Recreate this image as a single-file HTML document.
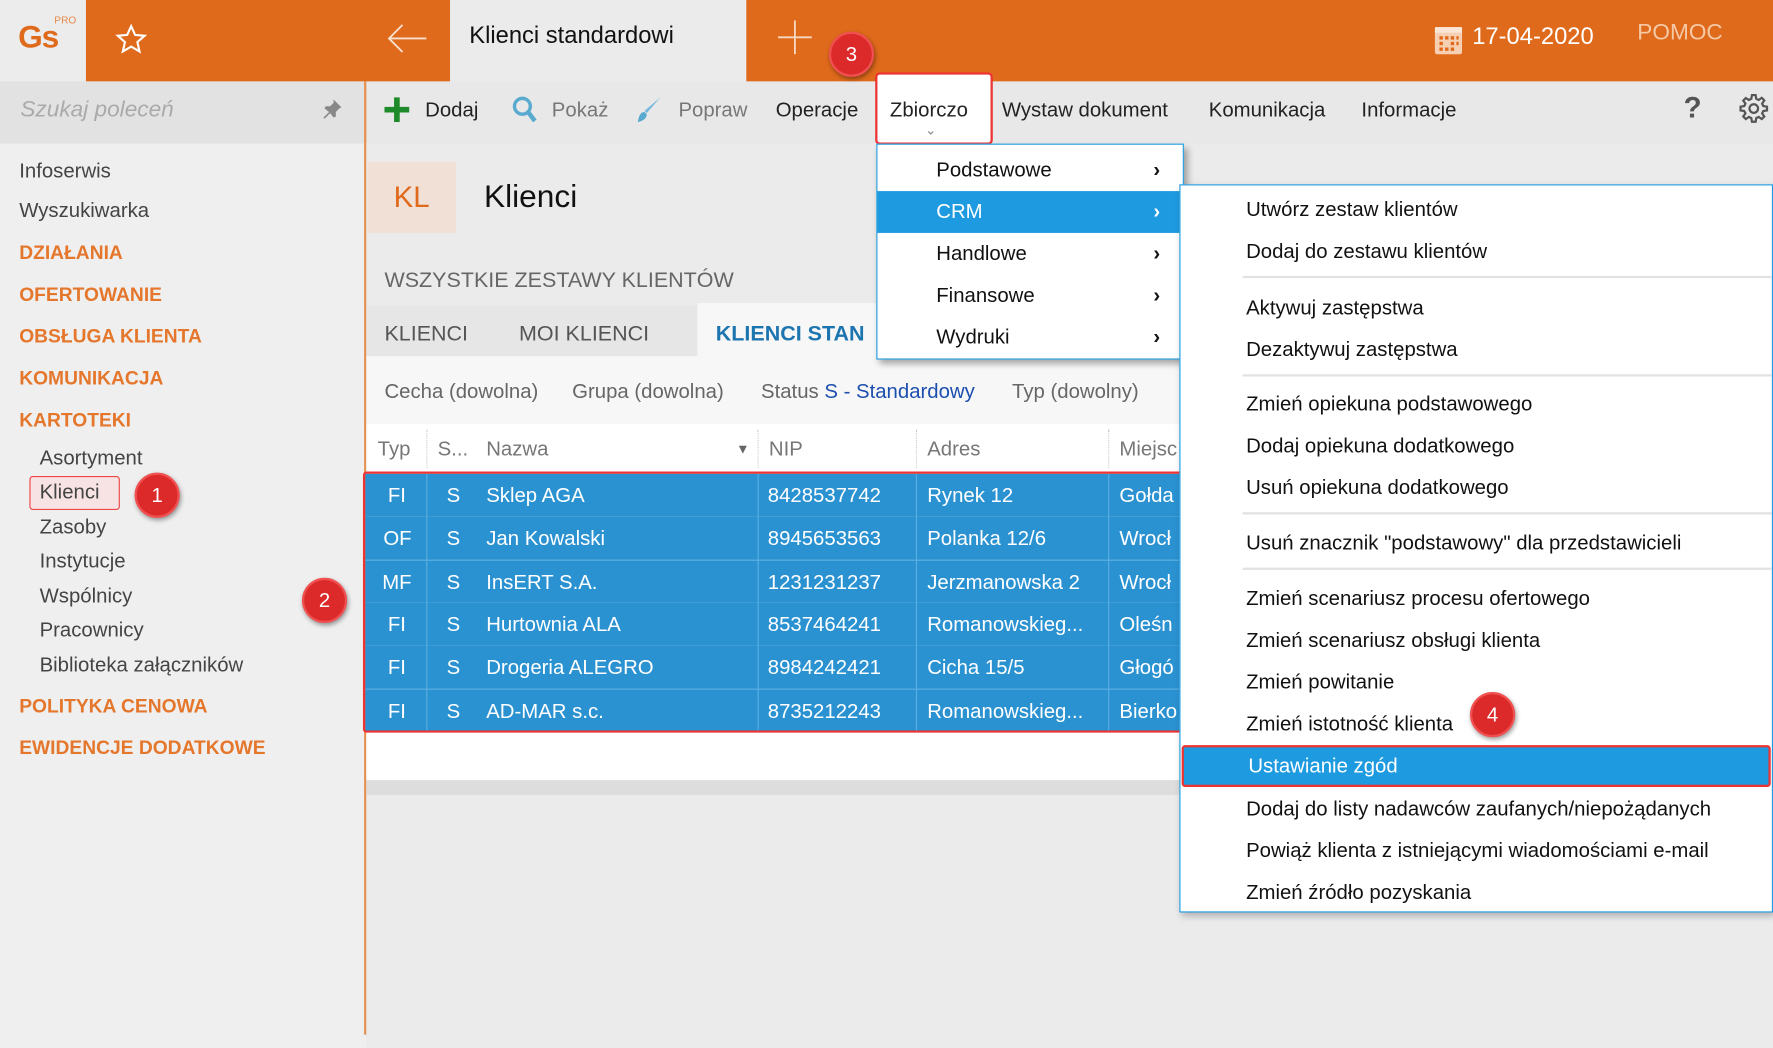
<!DOCTYPE html>
<html><head><meta charset="utf-8"><style>
*{margin:0;padding:0;box-sizing:border-box}
html,body{width:1773px;height:915px;overflow:hidden;background:#efefef}
#w{position:absolute;left:0;top:0;width:1568px;height:810px;transform:scale(1.13074);transform-origin:0 0;font-family:"Liberation Sans","DejaVu Sans",sans-serif;color:#222;font-size:18px}
.a{position:absolute;white-space:nowrap}
.or{color:#e5772c;font-weight:bold;font-size:17px}
.sb{color:#444;font-size:18px}
.mi{position:absolute;left:0;right:0;height:37px;line-height:37px;font-size:18px;color:#111}
.sep{position:absolute;left:55px;right:0;height:2px;background:#e2e2e2}
.row{position:absolute;left:323px;width:722px;height:38px;line-height:38px;color:#fff;font-size:18px;background:#2b92d2}
.row span{position:absolute}
.badge{position:absolute;width:40px;height:40px;border-radius:50%;background:#dc2a2a;color:#fff;text-align:center;line-height:36px;font-size:18px;box-shadow:1px 2px 4px rgba(0,0,0,.4);border:2px solid #f05050}
.chev{position:absolute;left:244px;font-weight:bold}
</style></head><body><div id="w">
<div class="a" style="left:0;top:0;width:76px;height:72px;background:#ececec"></div>
<div class="a" style="left:16px;top:17px;font-size:28px;color:#e06a1b;font-weight:bold;letter-spacing:-1px">Gs</div>
<div class="a" style="left:48px;top:13px;font-size:9px;color:#e88a4a">PRO</div>
<div class="a" style="left:76px;top:0;width:322px;height:72px;background:#e06a1b"></div>
<svg class="a" style="left:101px;top:20px" width="30" height="30" viewBox="0 0 24 24"><path d="M12 2.5l2.8 6.2 6.7.6-5.1 4.5 1.5 6.6L12 17l-5.9 3.4 1.5-6.6-5.1-4.5 6.7-.6z" fill="none" stroke="#fff" stroke-width="1.5"/></svg>
<svg class="a" style="left:341px;top:20px" width="38" height="28" viewBox="0 0 38 28"><path d="M36 14H3M15 2L3 14l12 12" fill="none" stroke="#f8e0d0" stroke-width="1.6"/></svg>
<div class="a" style="left:398px;top:0;width:262px;height:72px;background:#ebebeb"></div>
<div class="a" style="left:415px;top:20px;font-size:21px;color:#111">Klienci standardowi</div>
<div class="a" style="left:660px;top:0;width:908px;height:72px;background:#e06a1b"></div>
<svg class="a" style="left:688px;top:18px" width="30" height="30"><path d="M15 0v30M0 15h30" stroke="#f8d8c0" stroke-width="1.6"/></svg>
<svg class="a" style="left:1268px;top:22px" width="26" height="28" viewBox="0 0 26 28"><rect x="1" y="2" width="24" height="24" rx="2" fill="#f7cfb3"/><rect x="1" y="2" width="24" height="5" fill="#fbe5d5"/><g fill="#e06a1b"><rect x="5" y="10" width="3" height="3"/><rect x="10" y="10" width="3" height="3"/><rect x="15" y="10" width="3" height="3"/><rect x="20" y="10" width="2" height="3"/><rect x="5" y="15" width="3" height="3"/><rect x="15" y="15" width="3" height="3"/><rect x="20" y="15" width="2" height="3"/><rect x="5" y="20" width="3" height="3"/><rect x="10" y="20" width="3" height="3"/><rect x="15" y="20" width="3" height="3"/></g></svg>
<div class="a" style="left:1302px;top:21px;font-size:21px;color:#fff">17-04-2020</div>
<div class="a" style="left:1448px;top:18px;font-size:20px;color:#f6c8a6">POMOC</div>

<div class="a" style="left:0;top:72px;width:322px;height:55px;background:#e2e2e2"></div>
<div class="a" style="left:18px;top:86px;font-size:20px;color:#aaa;font-style:italic">Szukaj poleceń</div>
<svg class="a" style="left:284px;top:86px" width="20" height="20" viewBox="0 0 20 20"><path d="M11 2l7 7-2 1-3 3 0 4-2 1-3-4-5 5-1-1 5-5-4-3 1-2 4 0 3-3z" fill="#888"/></svg>
<div class="a" style="left:322px;top:72px;width:2px;height:843px;background:#e6904f"></div>
<div class="a sb" style="left:17px;top:141px">Infoserwis</div>
<div class="a sb" style="left:17px;top:176px">Wyszukiwarka</div>
<div class="a or" style="left:17px;top:214px">DZIAŁANIA</div>
<div class="a or" style="left:17px;top:251px">OFERTOWANIE</div>
<div class="a or" style="left:17px;top:288px">OBSŁUGA KLIENTA</div>
<div class="a or" style="left:17px;top:325px">KOMUNIKACJA</div>
<div class="a or" style="left:17px;top:362px">KARTOTEKI</div>
<div class="a sb" style="left:35px;top:395px">Asortyment</div>
<div class="a" style="left:26px;top:421px;width:80px;height:30px;border:1.5px solid #e44;border-radius:3px;background:#f7e3e3"></div>
<div class="a sb" style="left:35px;top:425px">Klienci</div>
<div class="a sb" style="left:35px;top:456px">Zasoby</div>
<div class="a sb" style="left:35px;top:486px">Instytucje</div>
<div class="a sb" style="left:35px;top:517px">Wspólnicy</div>
<div class="a sb" style="left:35px;top:547px">Pracownicy</div>
<div class="a sb" style="left:35px;top:578px">Biblioteka załączników</div>
<div class="a or" style="left:17px;top:615px">POLITYKA CENOWA</div>
<div class="a or" style="left:17px;top:652px">EWIDENCJE DODATKOWE</div>
<div class="badge" style="left:119px;top:418px">1</div>

<div class="a" style="left:324px;top:72px;width:1244px;height:55px;background:#e8e8e8"></div>
<svg class="a" style="left:340px;top:86px" width="22" height="22"><path d="M11 0v22M0 11h22" stroke="#1f8a2a" stroke-width="5"/></svg>
<div class="a" style="left:376px;top:87px">Dodaj</div>
<svg class="a" style="left:452px;top:84px" width="24" height="26" viewBox="0 0 24 26"><circle cx="10" cy="10" r="7" fill="none" stroke="#5aaad0" stroke-width="3"/><path d="M15 15l6 8" stroke="#5aaad0" stroke-width="4"/></svg>
<div class="a" style="left:488px;top:87px;color:#777">Pokaż</div>
<svg class="a" style="left:562px;top:84px" width="24" height="26" viewBox="0 0 24 26"><path d="M22 2L10 16l-2-2z" fill="#78b8dc"/><path d="M8 15c-4 0-5 4-6 9 4-1 8-3 8-7z" fill="#5aaad0"/></svg>
<div class="a" style="left:600px;top:87px;color:#777">Popraw</div>
<div class="a" style="left:686px;top:87px">Operacje</div>
<div class="a" style="left:774px;top:64px;width:104px;height:64px;border:2px solid #e33;border-radius:4px;background:#fff"></div>
<div class="a" style="left:787px;top:87px">Zbiorczo</div>
<div class="a" style="left:818px;top:108px;font-size:12px;color:#888">&#8964;</div>
<div class="a" style="left:886px;top:87px">Wystaw dokument</div>
<div class="a" style="left:1069px;top:87px">Komunikacja</div>
<div class="a" style="left:1204px;top:87px">Informacje</div>
<div class="a" style="left:1489px;top:80px;font-size:26px;color:#555;font-weight:bold">?</div>
<svg class="a" style="left:1538px;top:83px" width="26" height="26" viewBox="0 0 24 24"><path d="M12 8.5a3.5 3.5 0 1 0 0 7 3.5 3.5 0 0 0 0-7zM10.5 1h3l.5 3 2 1 2.5-1.8 2.1 2.1L18.8 8l1 2 3 .5v3l-3 .5-1 2 1.8 2.5-2.1 2.1-2.5-1.8-2 1-.5 3h-3l-.5-3-2-1-2.5 1.8-2.1-2.1L5.2 16l-1-2-3-.5v-3l3-.5 1-2-1.8-2.5 2.1-2.1L8 5l2-1z" fill="none" stroke="#555" stroke-width="1.8"/></svg>
<div class="badge" style="left:733px;top:28px">3</div>

<div class="a" style="left:324px;top:127px;width:1244px;height:800px;background:#ebebeb"></div>
<div class="a" style="left:325px;top:143px;width:78px;height:63px;background:#f0e0d6;color:#e06a1b;font-size:26px;text-align:center;line-height:63px">KL</div>
<div class="a" style="left:428px;top:158px;font-size:28px;color:#111">Klienci</div>
<div class="a" style="left:340px;top:238px;font-size:19px;color:#666">WSZYSTKIE ZESTAWY KLIENTÓW</div>
<div class="a" style="left:324px;top:270px;width:292px;height:45px;background:#e6e6e6"></div>
<div class="a" style="left:340px;top:285px;font-size:19px;color:#555">KLIENCI</div>
<div class="a" style="left:459px;top:285px;font-size:19px;color:#555">MOI KLIENCI</div>
<div class="a" style="left:617px;top:268px;width:430px;height:47px;background:#f7f7f7"></div>
<div class="a" style="left:633px;top:285px;font-size:19px;color:#1d75b0;font-weight:bold">KLIENCI STAN</div>
<div class="a" style="left:324px;top:315px;width:1244px;height:60px;background:#f7f7f7"></div>
<div class="a" style="left:340px;top:336px;color:#666">Cecha (dowolna)</div>
<div class="a" style="left:506px;top:336px;color:#666">Grupa (dowolna)</div>
<div class="a" style="left:673px;top:336px;color:#666">Status <span style="color:#1c4fb0">S - Standardowy</span></div>
<div class="a" style="left:895px;top:336px;color:#666">Typ (dowolny)</div>
<div class="a" style="left:324px;top:375px;width:1244px;height:42px;background:#fff"></div>
<div class="a" style="left:334px;top:387px;color:#777">Typ</div>
<div class="a" style="left:387px;top:387px;color:#777">S...</div>
<div class="a" style="left:430px;top:387px;color:#777">Nazwa</div>
<div class="a" style="left:651px;top:390px;font-size:12px;color:#666">▼</div>
<div class="a" style="left:680px;top:387px;color:#777">NIP</div>
<div class="a" style="left:820px;top:387px;color:#777">Adres</div>
<div class="a" style="left:990px;top:387px;color:#777">Miejsc</div>
<div class="a" style="left:377px;top:380px;height:34px;border-left:1px dotted #ccc"></div>
<div class="a" style="left:670px;top:380px;height:34px;border-left:1px dotted #ccc"></div>
<div class="a" style="left:810px;top:380px;height:34px;border-left:1px dotted #ccc"></div>
<div class="a" style="left:980px;top:380px;height:34px;border-left:1px dotted #ccc"></div>

<div class="row" style="top:419px"><span style="left:20px">FI</span><span style="left:72px">S</span><span style="left:107px">Sklep AGA</span><span style="left:356px">8428537742</span><span style="left:497px">Rynek 12</span><span style="left:667px">Gołda</span></div>
<div class="row" style="top:457px"><span style="left:16px">OF</span><span style="left:72px">S</span><span style="left:107px">Jan Kowalski</span><span style="left:356px">8945653563</span><span style="left:497px">Polanka  12/6</span><span style="left:667px">Wrocł</span></div>
<div class="row" style="top:495px;border-top:1px solid #5aaee0"><span style="left:15px">MF</span><span style="left:72px">S</span><span style="left:107px">InsERT S.A.</span><span style="left:356px">1231231237</span><span style="left:497px">Jerzmanowska 2</span><span style="left:667px">Wrocł</span></div>
<div class="row" style="top:533px"><span style="left:20px">FI</span><span style="left:72px">S</span><span style="left:107px">Hurtownia ALA</span><span style="left:356px">8537464241</span><span style="left:497px">Romanowskieg...</span><span style="left:667px">Oleśn</span></div>
<div class="row" style="top:571px"><span style="left:20px">FI</span><span style="left:72px">S</span><span style="left:107px">Drogeria ALEGRO</span><span style="left:356px">8984242421</span><span style="left:497px">Cicha  15/5</span><span style="left:667px">Głogó</span></div>
<div class="row" style="top:609px;border-top:1px solid #5aaee0"><span style="left:20px">FI</span><span style="left:72px">S</span><span style="left:107px">AD-MAR s.c.</span><span style="left:356px">8735212243</span><span style="left:497px">Romanowskieg...</span><span style="left:667px">Bierko</span></div>
<div class="a" style="left:377px;top:419px;width:1px;height:228px;background:#5aaee0"></div>
<div class="a" style="left:670px;top:419px;width:1px;height:228px;background:#5aaee0"></div>
<div class="a" style="left:810px;top:419px;width:1px;height:228px;background:#5aaee0"></div>
<div class="a" style="left:980px;top:419px;width:1px;height:228px;background:#5aaee0"></div>
<div class="a" style="left:321px;top:417px;width:726px;height:231px;border:2px solid #e33;border-radius:3px"></div>
<div class="a" style="left:324px;top:648px;width:720px;height:42px;background:#fff"></div>
<div class="a" style="left:324px;top:690px;width:720px;height:13px;background:#ddd"></div>
<div class="badge" style="left:267px;top:511px">2</div>

<div class="a" style="left:775px;top:127px;width:272px;height:191px;background:#fff;border:1px solid #1e9be0;box-shadow:3px 4px 6px rgba(0,0,0,.35)">
<div class="mi" style="top:4px"><span style="position:absolute;left:52px">Podstawowe</span><span class="chev">›</span></div>
<div class="mi" style="top:41px;background:#1e9be0;color:#fff"><span style="position:absolute;left:52px">CRM</span><span class="chev">›</span></div>
<div class="mi" style="top:78px"><span style="position:absolute;left:52px">Handlowe</span><span class="chev">›</span></div>
<div class="mi" style="top:115px"><span style="position:absolute;left:52px">Finansowe</span><span class="chev">›</span></div>
<div class="mi" style="top:152px"><span style="position:absolute;left:52px">Wydruki</span><span class="chev">›</span></div>
</div>

<div class="a" style="left:1043px;top:163px;width:525px;height:644px;background:#fff;border:1px solid #1e9be0;box-shadow:2px 3px 6px rgba(0,0,0,.25)">
<div class="mi" style="top:3px;padding-left:58px">Utwórz zestaw klientów</div>
<div class="mi" style="top:40px;padding-left:58px">Dodaj do zestawu klientów</div>
<div class="sep" style="top:80px"></div>
<div class="mi" style="top:90px;padding-left:58px">Aktywuj zastępstwa</div>
<div class="mi" style="top:127px;padding-left:58px">Dezaktywuj zastępstwa</div>
<div class="sep" style="top:167px"></div>
<div class="mi" style="top:175px;padding-left:58px">Zmień opiekuna podstawowego</div>
<div class="mi" style="top:212px;padding-left:58px">Dodaj opiekuna dodatkowego</div>
<div class="mi" style="top:249px;padding-left:58px">Usuń opiekuna dodatkowego</div>
<div class="sep" style="top:289px"></div>
<div class="mi" style="top:298px;padding-left:58px">Usuń znacznik "podstawowy" dla przedstawicieli</div>
<div class="sep" style="top:338px"></div>
<div class="mi" style="top:347px;padding-left:58px">Zmień scenariusz procesu ofertowego</div>
<div class="mi" style="top:384px;padding-left:58px">Zmień scenariusz obsługi klienta</div>
<div class="mi" style="top:421px;padding-left:58px">Zmień powitanie</div>
<div class="mi" style="top:458px;padding-left:58px">Zmień istotność klienta</div>
<div class="mi" style="top:495px;left:1px;right:1px;padding-left:57px;background:#1e9be0;color:#fff;border:2px solid #e33;border-radius:3px;line-height:33px">Ustawianie zgód</div>
<div class="mi" style="top:533px;padding-left:58px">Dodaj do listy nadawców zaufanych/niepożądanych</div>
<div class="mi" style="top:570px;padding-left:58px">Powiąż klienta z istniejącymi wiadomościami e-mail</div>
<div class="mi" style="top:607px;padding-left:58px">Zmień źródło pozyskania</div>
</div>
<div class="badge" style="left:1300px;top:612px">4</div>
</div></body></html>
